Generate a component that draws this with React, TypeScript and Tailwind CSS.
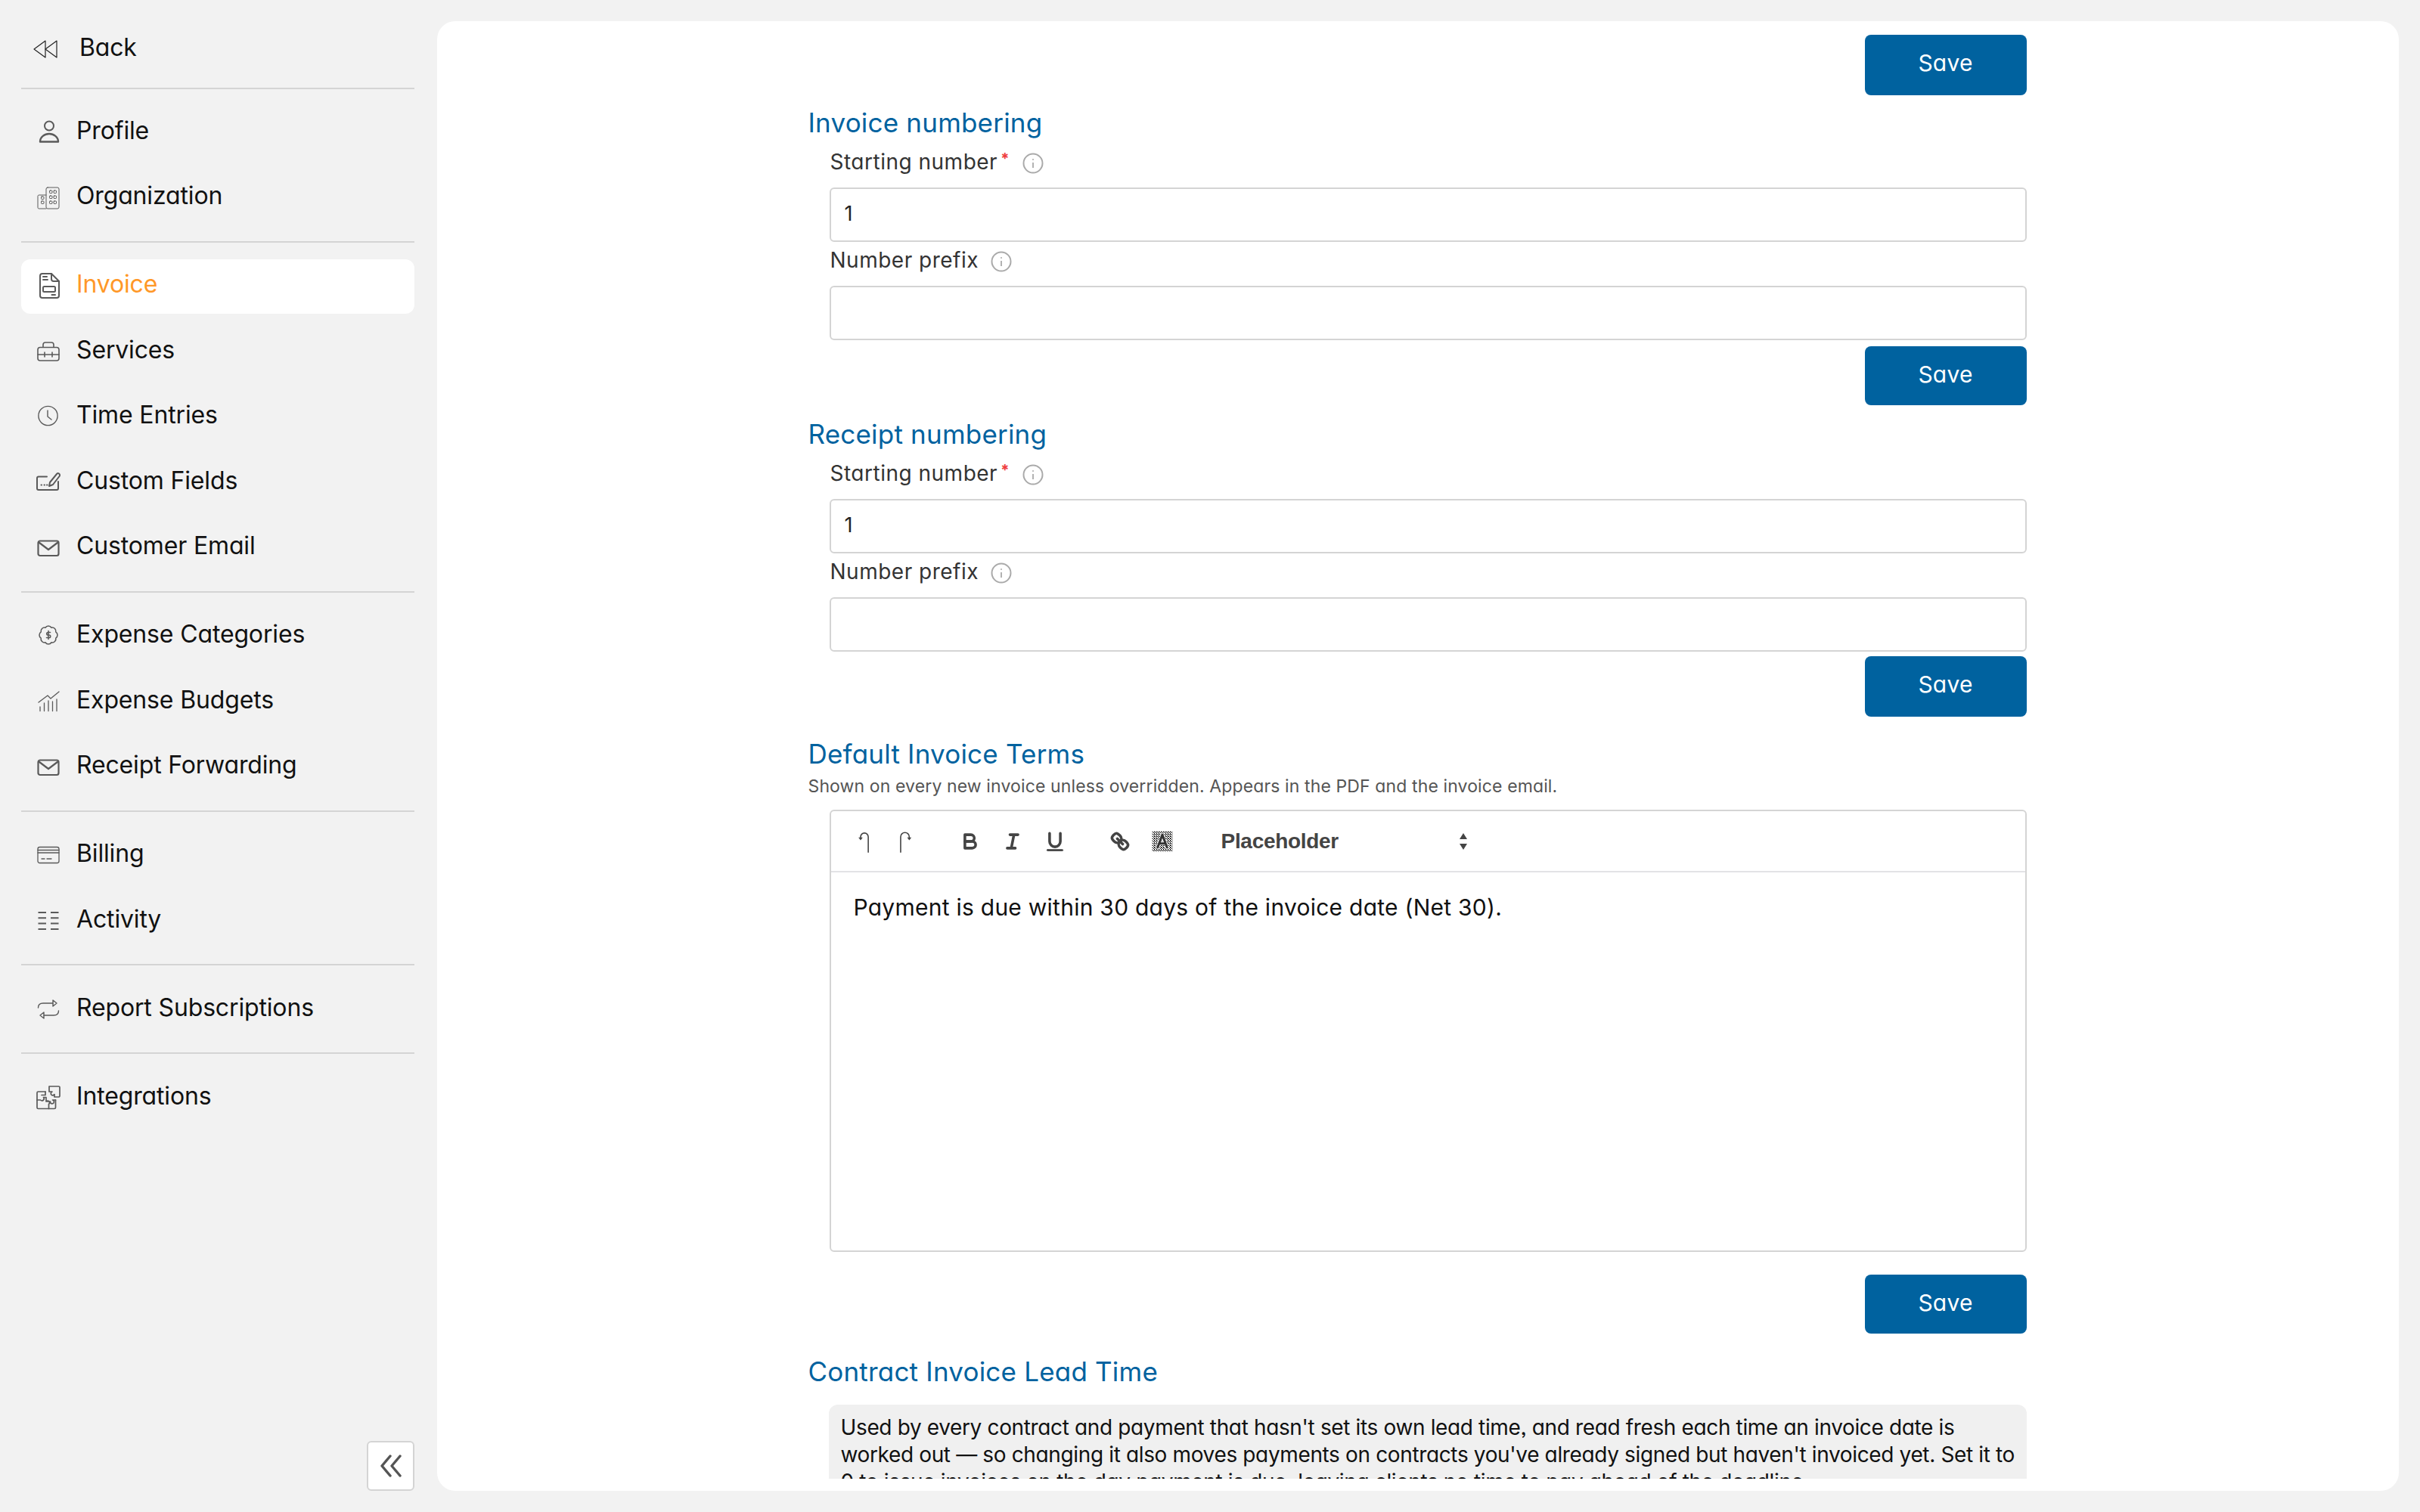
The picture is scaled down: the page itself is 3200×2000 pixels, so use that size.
import React from "react";

type IconProps = { children: React.ReactNode; sw?: number; color?: string };

function Ico({ children, sw = 2, color = "#5a5a5a" }: IconProps) {
  return (
    <svg viewBox="0 0 32 32" width="32" height="32" fill="none" stroke={color} strokeWidth={sw} strokeLinecap="round" strokeLinejoin="round" className="shrink-0 overflow-visible">
      {children}
    </svg>
  );
}

const ProfileIcon = () => (
  <Ico>
    <circle cx="17" cy="7.5" r="6" />
    <path d="M5 28.5C5 22 11 18 17 18C23 18 29 22 29 28.5Z" strokeWidth="2.4" />
  </Ico>
);
const OrgIcon = () => (
  <Ico sw={1}>
    <path d="M13 12H3.5A1.5 1.5 0 0 0 2 13.5V28.5A1.5 1.5 0 0 0 3.5 30H13" />
    <rect x="13" y="2" width="17" height="28" rx="2" />
    {[[17.5, 6], [23, 6], [17.5, 13], [23, 13], [17.5, 20], [23, 20], [6.5, 14], [6.5, 20]].map(([x, y], i) => (
      <rect key={i} x={x} y={y} width="3.5" height="3.5" rx="0.8" />
    ))}
  </Ico>
);
const InvoiceIcon = () => (
  <Ico>
    <path d="M8 -1H20L30 9V28A3 3 0 0 1 27 31H8A3 3 0 0 1 5 28V2A3 3 0 0 1 8 -1Z" />
    <path d="M20 -1V6A3 3 0 0 0 23 9H30" />
    <path d="M9 3H14M9 7H15" />
    <rect x="9" y="16" width="16" height="7" rx="1.5" />
    <path d="M20.5 27H25" />
  </Ico>
);
const ServicesIcon = () => (
  <Ico sw={1.6}>
    <rect x="2" y="10.5" width="28" height="17.5" rx="3" />
    <path d="M9 10V7A3 3 0 0 1 12 4H20A3 3 0 0 1 23 7V10" />
    <path d="M2 20H30M11 17V23M21 17V23" />
  </Ico>
);
const ClockIcon = () => (
  <Ico sw={1.4}>
    <circle cx="15.5" cy="14" r="12.6" />
    <path d="M15 7V15L20 19" />
  </Ico>
);
const FieldsIcon = () => (
  <Ico>
    <path d="M14 8.5H3A2 2 0 0 0 1 10.5V24A2 2 0 0 0 3 26H27A2 2 0 0 0 29 24V15" />
    <path d="M17 21L18 16L27 5A2.2 2.2 0 0 1 30.5 8L22 19Z" />
    <path d="M6.5 19.5H7M10.5 19.5H11M14 19.5H14.5" />
  </Ico>
);
const MailIcon = () => (
  <Ico sw={2.2}>
    <rect x="2.5" y="6.5" width="27" height="19.5" rx="2.5" />
    <path d="M3.5 8.5L16 18L28.5 8.5" />
  </Ico>
);
const BadgeIcon = () => (
  <Ico sw={1.6}>
    <g transform="translate(1.6 -0.4) scale(1.2)" strokeWidth="1.3">
      <path d="M3.85 8.62a4 4 0 0 1 4.78-4.77 4 4 0 0 1 6.74 0 4 4 0 0 1 4.78 4.78 4 4 0 0 1 0 6.74 4 4 0 0 1-4.77 4.78 4 4 0 0 1-6.75 0 4 4 0 0 1-4.78-4.77 4 4 0 0 1 0-6.76Z" />
    </g>
    <path d="M18.5 10.5H15.5A1.7 1.7 0 0 0 15.5 14H17A1.7 1.7 0 0 1 17 17.5H13.5M16 8.5V19.5" />
  </Ico>
);
const BudgetIcon = () => (
  <Ico sw={1.3}>
    <path d="M3 17L15 8L19 12L30 3" />
    <path d="M5 23V28.5M10.5 18V28.5M16 15V28.5M21.5 16V28.5M27 13V28.5" />
  </Ico>
);
const BillingIcon = () => (
  <Ico sw={1.3}>
    <rect x="2" y="4.5" width="28" height="21" rx="2.5" />
    <path d="M2 8.5H30M2 12H30M7 20H11M14 20H20" />
  </Ico>
);
const ActivityIcon = () => (
  <Ico sw={2}>
    <path d="M2.5 5H13M19 5H29.5M2.5 12.3H13M19 12.3H29.5M2.5 19.6H13M19 19.6H29.5M2.5 27H13M19 27H29.5" strokeLinecap="butt" />
  </Ico>
);
const RepeatIcon = () => (
  <Ico sw={1.4}>
    <path d="M2.5 14C2.5 10 5 8 9 8H22" />
    <path d="M22 4L27 8L22 12Z" />
    <path d="M29.5 18C29.5 22 27 24 23 24H10" />
    <path d="M10 20L5 24L10 28Z" />
  </Ico>
);
const PuzzleIcon = () => (
  <Ico sw={1.7}>
    <path d="M12 8H2.5A1.5 1.5 0 0 0 1 9.5V29A1.5 1.5 0 0 0 2.5 30.5H24A1.5 1.5 0 0 0 25.5 29V19" />
    <path d="M1 19H5.5A2.5 2.5 0 1 0 9.5 15.5H13V21A2.5 2.5 0 1 1 16.5 24.5V30.5M13 21H18.5A2.5 2.5 0 1 0 21.5 19H25.5" />
    <path d="M12 8V12.5H7" />
    <path d="M17 1H29.5A1.5 1.5 0 0 1 31 2.5V13.5A1.5 1.5 0 0 1 29.5 15H24V11.5A2.5 2.5 0 1 1 21 8H17Z" />
  </Ico>
);
const BackIcon = () => (
  <svg viewBox="0 0 32 24" width="32" height="24" fill="none" stroke="#222" strokeWidth="1.2" strokeLinejoin="round" className="shrink-0">
    <path d="M16 1L1 12L16 23Z" />
    <path d="M31 1L16 12L31 23Z" />
  </svg>
);

type Item = { label: string; icon: React.ReactNode; active?: boolean };

const groups: Item[][] = [
  [
    { label: "Profile", icon: <ProfileIcon /> },
    { label: "Organization", icon: <OrgIcon /> },
  ],
  [
    { label: "Invoice", icon: <InvoiceIcon />, active: true },
    { label: "Services", icon: <ServicesIcon /> },
    { label: "Time Entries", icon: <ClockIcon /> },
    { label: "Custom Fields", icon: <FieldsIcon /> },
    { label: "Customer Email", icon: <MailIcon /> },
  ],
  [
    { label: "Expense Categories", icon: <BadgeIcon /> },
    { label: "Expense Budgets", icon: <BudgetIcon /> },
    { label: "Receipt Forwarding", icon: <MailIcon /> },
  ],
  [
    { label: "Billing", icon: <BillingIcon /> },
    { label: "Activity", icon: <ActivityIcon /> },
  ],
  [{ label: "Report Subscriptions", icon: <RepeatIcon /> }],
  [{ label: "Integrations", icon: <PuzzleIcon /> }],
];

function NavItem({ item }: { item: Item }) {
  return (
    <div className={`flex h-[72px] items-center gap-[21px] rounded-[12px] px-[20px] ${item.active ? "bg-white text-[#ff9828]" : "text-[#111111]"}`}>
      {item.icon}
      <span className="pb-[5px] text-[32px] leading-[40px] tracking-[-0.15px]">{item.label}</span>
    </div>
  );
}

function Sidebar() {
  return (
    <aside className="flex h-full w-[578px] shrink-0 flex-col pl-[28px] pr-[30px]">
      <div className="flex h-[116px] items-center gap-[29px] pl-[16px] pt-[14px] text-[#111111]">
        <BackIcon />
        <span className="pb-[4px] text-[32px] leading-[40px] tracking-[-0.15px]">Back</span>
      </div>
      {groups.map((g, i) => (
        <React.Fragment key={i}>
          <div className={`h-[2px] bg-[#d4d4d4] ${i === 0 ? "mb-[21px]" : "mb-[22px] mt-[21px]"}`} />
          <div className="flex flex-col gap-[14.5px]">
            {g.map((it) => (
              <NavItem key={it.label} item={it} />
            ))}
          </div>
        </React.Fragment>
      ))}
      <button className="mb-[28px] mt-auto flex h-[66px] w-[63px] items-center justify-center self-end rounded-[6px] border-2 border-[#d4d4d4] bg-white">
        <svg viewBox="0 0 30 30" width="30" height="30" fill="none" stroke="#555555" strokeWidth="3.4" strokeLinecap="round" strokeLinejoin="round">
          <path d="M14 2L3 15L14 28" />
          <path d="M27 2L16 15L27 28" />
        </svg>
      </button>
    </aside>
  );
}

function Save({ className }: { className: string }) {
  return (
    <button className={`flex w-[214px] shrink-0 items-center justify-center self-end rounded-[8px] bg-[#00629f] text-[30px] leading-[40px] tracking-[0.2px] text-white ${className}`}>
      Save
    </button>
  );
}

function Heading({ children, className }: { children: React.ReactNode; className: string }) {
  return <h2 className={`flex h-[48px] items-center pb-[2px] text-[35px] font-normal tracking-[0.2px] text-[#00629f] ${className}`}>{children}</h2>;
}

function InfoIcon() {
  return (
    <svg viewBox="0 0 28 28" width="28" height="28" fill="none" stroke="#aaaaaa" strokeWidth="2" className="shrink-0">
      <circle cx="14" cy="14" r="12.5" />
      <path d="M14 13V20" strokeWidth="1.8" />
      <circle cx="14" cy="9" r="1" fill="#aaaaaa" stroke="none" />
    </svg>
  );
}

function Label({ text, required, className }: { text: string; required?: boolean; className: string }) {
  return (
    <div className={`ml-[29px] flex h-[40px] items-center ${className}`}>
      <span className="pb-[2px] text-[28px] leading-[36px] tracking-[0.5px] text-[#333333]">{text}</span>
      {required && <span className="mb-[10px] ml-[4px] text-[20px] font-bold leading-[20px] text-[#ef3e3e]">*</span>}
      <span className={`${required ? "ml-[18px]" : "ml-[16px]"} mt-[2px] flex`}>
        <InfoIcon />
      </span>
    </div>
  );
}

function Field({ value }: { value?: string }) {
  return (
    <div className="ml-[28px] mt-[13px] flex h-[72px] items-center rounded-[6px] border-2 border-[#d4d4d4] bg-white pb-[2px] pl-[18px] text-[27px] text-[#222222]">
      {value}
    </div>
  );
}

function Numbering({ title, hClass }: { title: string; hClass: string }) {
  return (
    <>
      <Heading className={hClass}>{title}</Heading>
      <Label text="Starting number" required className="mt-[8px]" />
      <Field value="1" />
      <Label text="Number prefix" className="mt-[5px]" />
      <Field />
    </>
  );
}

function QBtn({ children }: { children: React.ReactNode }) {
  return (
    <span className="flex w-[56px] items-center justify-center">
      <svg viewBox="0 0 18 18" width="32" height="32" fill="none" stroke="#444444" strokeWidth="2" strokeLinecap="round" strokeLinejoin="round" className="overflow-visible">
        {children}
      </svg>
    </span>
  );
}

function Toolbar() {
  return (
    <div className="flex h-[81px] items-center border-b-2 border-[#e3e3e6] px-[14px]">
      <QBtn>
        <path d="M13 17V5.6A2.85 2.85 0 0 0 7.3 5.6V6.5" strokeWidth="0.9" />
        <path d="M5.7 6H8.9L7.3 8.2Z" fill="#444444" stroke="none" />
      </QBtn>
      <QBtn>
        <path d="M5.6 17V5.6A3.2 3.2 0 0 1 12 5.6V6.5" strokeWidth="0.9" />
        <path d="M10.4 6H13.6L12 8.2Z" fill="#444444" stroke="none" />
      </QBtn>
      <span className="w-[30px]" />
      <QBtn>
        <path d="M5 4H9.5A2.5 2.5 0 0 1 12 6.5A2.5 2.5 0 0 1 9.5 9H5Z" />
        <path d="M5 9H10.5A2.5 2.5 0 0 1 13 11.5A2.5 2.5 0 0 1 10.5 14H5Z" />
      </QBtn>
      <QBtn>
        <path d="M7 4H13M5 14H11M8 14L10 4" />
      </QBtn>
      <QBtn>
        <path d="M5 3V9A4 4 0 0 0 9 13A4 4 0 0 0 13 9V3" />
        <rect x="3" y="15" width="12" height="1" rx="0.5" fill="#444444" strokeWidth="0.5" />
      </QBtn>
      <span className="w-[30px]" />
      <QBtn>
        <path d="M7 7L11 11" />
        <path d="M8.9 4.577a3.476 3.476 0 0 1 .36 4.679A3.476 3.476 0 0 1 4.577 8.9C3.185 7.5 2.035 6.4 4.217 4.217S7.5 3.185 8.9 4.577Z" />
        <path d="M13.423 9.1a3.476 3.476 0 0 0-4.679-.36 3.476 3.476 0 0 0 .36 4.679c1.392 1.392 2.5 2.542 4.679.36S14.815 10.5 13.423 9.1Z" />
      </QBtn>
      <QBtn>
        <defs>
          <pattern id="hatch" width="1.6875" height="1.6875" patternUnits="userSpaceOnUse">
            <rect width="0.5625" height="0.5625" fill="#111111" stroke="none" />
            <rect x="0.5625" y="0.5625" width="0.5625" height="0.5625" fill="#111111" stroke="none" />
            <rect x="1.125" y="1.125" width="0.5625" height="0.5625" fill="#111111" stroke="none" />
            <rect x="1.125" y="0" width="0.5625" height="0.5625" fill="#111111" stroke="none" />
          </pattern>
        </defs>
        <rect x="1.5" y="1.5" width="15" height="15" fill="url(#hatch)" stroke="none" />
        <path d="M5.5 13.5L9 4L12.5 13.5M6.6 10.5H11.4" strokeWidth="2.6" stroke="#ffffff" />
        <path d="M5.5 13.5L9 4L12.5 13.5M6.6 10.5H11.4" strokeWidth="1.7" stroke="#333333" />
      </QBtn>
      <span className="w-[30px]" />
      <div className="flex w-[360px] items-center justify-between pl-[20px] pr-[14px] font-['Liberation_Sans',sans-serif] text-[28px] font-bold leading-[36px] tracking-[-0.3px] text-[#444444] [font-feature-settings:normal]">
        <span>Placeholder</span>
        <svg viewBox="0 0 12 26" width="12" height="26" fill="#444444">
          <path d="M6 2L11 10H1Z" />
          <path d="M6 24L11 16H1Z" />
        </svg>
      </div>
    </div>
  );
}

function Editor() {
  return (
    <div className="ml-[28px] mt-[16px] flex h-[585px] flex-col rounded-[6px] border-2 border-[#d4d4d4] bg-white">
      <Toolbar />
      <div className="px-[30px] pt-[25px] text-[30px] leading-[42px] tracking-[0.25px] text-[#111111]">
        Payment is due within 30 days of the invoice date (Net 30).
      </div>
    </div>
  );
}

function Content() {
  return (
    <main className="flex h-full min-w-0 flex-1 flex-col overflow-hidden rounded-[24px] bg-white pb-[16px] pr-[2px] pt-[18px]">
      <div className="min-h-0 flex-1 overflow-hidden">
        <div className="mx-auto flex w-[1611px] flex-col">
          <Save className="h-[80px] pb-[6px]" />
          <Numbering title="Invoice numbering" hClass="mt-[13px]" />
          <Save className="mt-[8px] h-[78px] pb-[4px]" />
          <Numbering title="Receipt numbering" hClass="mt-[15px]" />
          <Save className="mt-[6px] h-[80px] pb-[6px]" />
          <Heading className="mt-[26px]">Default Invoice Terms</Heading>
          <p className="mt-[3px] h-[30px] text-[23px] leading-[30px] tracking-[0.12px] text-[#555555]">
            Shown on every new invoice unless overridden. Appears in the PDF and the invoice email.
          </p>
          <Editor />
          <Save className="mt-[30px] h-[78px] pb-[4px]" />
          <Heading className="mt-[27px]">Contract Invoice Lead Time</Heading>
          <div className="ml-[27px] mt-[19px] whitespace-nowrap rounded-t-[12px] bg-[#f0f0f0] px-[16px] pt-[12px] text-[28px] leading-[36px] tracking-[-0.36px] text-[#111111]">
            Used by every contract and payment that hasn't set its own lead time, and read fresh each time an invoice date is
            <br />
            worked out — so changing it also moves payments on contracts you've already signed but haven't invoiced yet. Set it to
            <br />
            0 to issue invoices on the day payment is due, leaving clients no time to pay ahead of the deadline.
          </div>
        </div>
      </div>
    </main>
  );
}

export default function App() {
  return (
    <div className="flex h-screen w-screen overflow-hidden bg-[#f2f2f2] py-[28px] pr-[28px] font-[Inter,sans-serif] [font-feature-settings:'cv11','ss03']">
      <div className="-my-[28px] h-[calc(100%+56px)]">
        <Sidebar />
      </div>
      <Content />
    </div>
  );
}
